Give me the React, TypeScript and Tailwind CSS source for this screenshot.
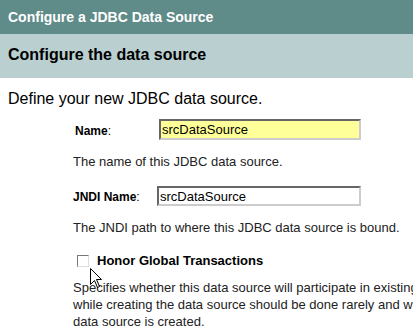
export default function App() {
  return (
    <div className="relative w-[413px] h-[335px] overflow-hidden bg-white font-['Liberation_Sans',Arial,sans-serif] text-black">
      <div className="h-[34px] bg-[#5f8b89] pl-2 pt-[7px] text-[14px] font-bold leading-[20px] text-white">
        Configure a JDBC Data Source
      </div>
      <div className="h-[44px] bg-[#b9cfd0] pl-2 pt-[11px] text-[16px] leading-[20px] font-bold">
        Configure the data source
      </div>

      <div className="pl-2 pt-[11px] text-[16px] leading-[20px]">
        Define your new JDBC data source.
      </div>

      <div className="mt-[10px] flex items-center pl-[75px]">
        <label className="w-[84px] pt-[2px] text-[12px] font-bold leading-[16px]">
          Name<span className="font-normal">:</span>
        </label>
        <input
          defaultValue="srcDataSource"
          className="h-[21px] w-[202px] border-2 border-t-[#666] border-l-[#666] border-b-[#ccc] border-r-[#ccc] bg-[#ffff99] px-[1px] text-[13px] outline-none"
        />
      </div>
      <div className="mt-[14px] pl-[73px] text-[13px] leading-[16px] text-[#222]">
        The name of this JDBC data source.
      </div>

      <div className="mt-[16px] flex items-center pl-[73px]">
        <label className="w-[84px] pt-[2px] text-[12px] font-bold leading-[16px]">
          JNDI Name<span className="font-normal">:</span>
        </label>
        <input
          defaultValue="srcDataSource"
          className="h-[20px] w-[204px] border-2 border-t-[#666] border-l-[#666] border-b-[#ccc] border-r-[#ccc] bg-white px-[1px] text-[13px] outline-none"
        />
      </div>
      <div className="mt-[14px] pl-[73px] text-[13px] leading-[16px] text-[#222]">
        The JNDI path to where this JDBC data source is bound.
      </div>

      <div className="mt-[17px] flex items-center gap-[8px] pl-[77px]">
        <span className="h-[12px] w-[12px] border border-t-[#777] border-l-[#777] border-b-[#ddd] border-r-[#ddd] bg-white" />
        <span className="text-[13px] font-bold leading-[16px]">Honor Global Transactions</span>
      </div>

      <div className="mt-[10px] whitespace-nowrap pl-[73px] text-[13px] leading-[17px] text-[#222]">
        <div>Specifies whether this data source will participate in existing global transactions, changing</div>
        <div>while creating the data source should be done rarely and with care after the</div>
        <div>data source is created.</div>
      </div>

      <svg
        className="absolute left-[90px] top-[268px]"
        width="13"
        height="21"
        viewBox="0 0 13 21"
      >
        <path
          d="M0.5 0.5 L0.5 16.5 L4.5 12.5 L7.5 19.5 L9.5 18.5 L6.5 11.5 L11.5 11.5 Z"
          fill="white"
          stroke="black"
          strokeWidth="1"
        />
      </svg>
    </div>
  );
}
